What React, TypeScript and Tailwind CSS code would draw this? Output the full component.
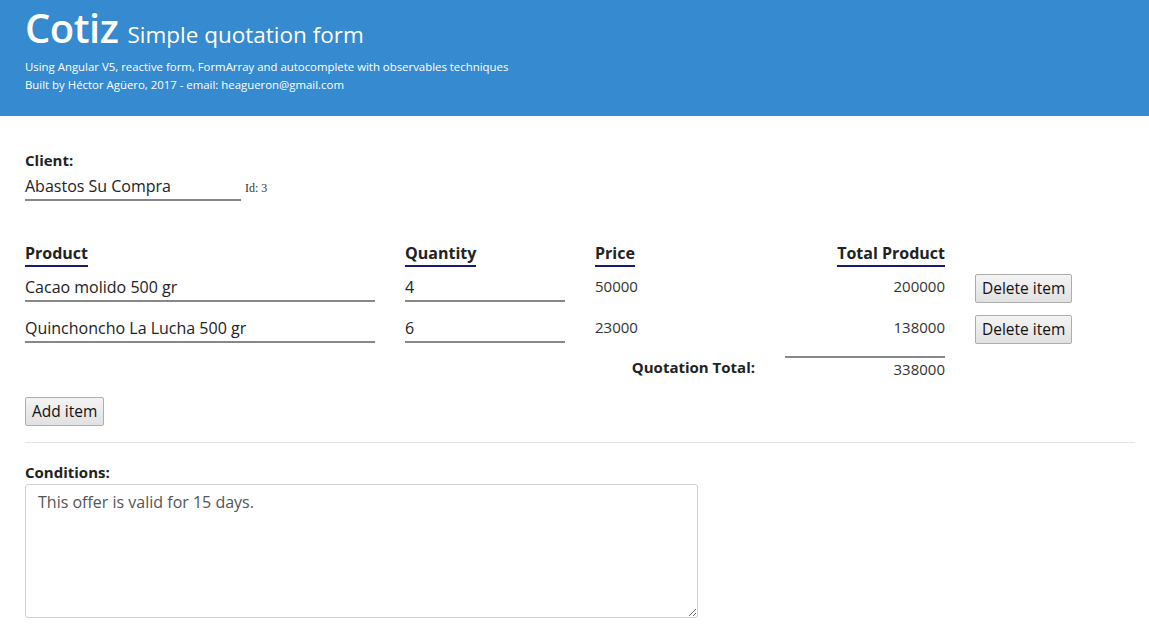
import React from 'react';

interface Item {
  product: string;
  quantity: number;
  price: number;
}

const items: Item[] = [
  { product: 'Cacao molido 500 gr', quantity: 4, price: 50000 },
  { product: 'Quinchoncho La Lucha 500 gr', quantity: 6, price: 23000 },
];

const btn =
  'h-[29px] px-[6px] text-[15.5px] text-[#111] border border-[#adadad] rounded-[2px] bg-gradient-to-b from-[#f4f4f4] to-[#e1e1e1]';

const App = () => {
  const total = items.reduce((s, i) => s + i.quantity * i.price, 0);

  return (
    <div className="min-h-screen bg-white text-[#222] font-['Open_Sans','Noto_Sans',sans-serif]">
      {/* Header */}
      <header className="h-[116px] bg-[#368ad0] text-white px-[25px] pt-[5px]">
        <div className="flex items-baseline gap-[9px]">
          <span className="text-[40px] font-semibold leading-[45px] tracking-[-0.5px]">Cotiz</span>
          <span className="text-[22.5px] leading-[45px]">Simple quotation form</span>
        </div>
        <p className="text-[11.4px] leading-[18px] mt-[1px]">
          Using Angular V5, reactive form, FormArray and autocomplete with observables techniques
        </p>
        <p className="text-[11.4px] leading-[18px]">Built by Héctor Agüero, 2017 - email: heagueron@gmail.com</p>
      </header>

      <main className="pl-[25px] pr-[14px] pt-[34px]">
        {/* Client */}
        <div className="text-[15px] font-bold leading-[20px]">Client:</div>
        <div className="flex items-end gap-[4px] mt-[3px]">
          <div className="w-[216px] h-[28px] border-b-2 border-[#888] text-[16px] leading-[26px]">Abastos Su Compra</div>
          <span className="text-[12px] font-['Liberation_Serif',serif] text-[#333] mb-[4px]">Id: 3</span>
        </div>

        {/* Items */}
        <div className="grid grid-cols-[350px_160px_160px_160px_auto] gap-x-[30px] mt-[41px]">
          <div className="text-[16px] font-bold leading-[22px]">
            <span className="border-b-2 border-[#1a1a6e] pb-[1px]">Product</span>
          </div>
          <div className="text-[16px] font-bold leading-[22px]">
            <span className="border-b-2 border-[#1a1a6e] pb-[1px]">Quantity</span>
          </div>
          <div className="text-[16px] font-bold leading-[22px]">
            <span className="border-b-2 border-[#1a1a6e] pb-[1px]">Price</span>
          </div>
          <div className="text-[16px] font-bold leading-[22px] text-right">
            <span className="border-b-2 border-[#1a1a6e] pb-[1px]">Total Product</span>
          </div>
          <div />

          {items.map((item, idx) => (
            <React.Fragment key={idx}>
              <div className={`h-[27px] border-b-2 border-[#888] text-[16px] leading-[25px] ${idx === 0 ? 'mt-[11px]' : 'mt-[13px]'}`}>
                {item.product}
              </div>
              <div className={`h-[27px] border-b-2 border-[#888] text-[16px] leading-[25px] ${idx === 0 ? 'mt-[11px]' : 'mt-[13px]'}`}>
                {item.quantity}
              </div>
              <div className={`text-[15px] leading-[25px] text-[#333] ${idx === 0 ? 'mt-[10px]' : 'mt-[12px]'}`}>{item.price}</div>
              <div className={`text-[15px] leading-[25px] text-[#333] text-right ${idx === 0 ? 'mt-[10px]' : 'mt-[12px]'}`}>
                {item.quantity * item.price}
              </div>
              <div className={idx === 0 ? 'mt-[10px]' : 'mt-[12px]'}>
                <button className={btn}>Delete item</button>
              </div>
            </React.Fragment>
          ))}

          <div />
          <div />
          <div className="text-right text-[15px] font-bold leading-[22px] mt-[12px]">Quotation Total:</div>
          <div className="mt-[12px] border-t-2 border-[#888] text-right text-[15px] leading-[22px] text-[#333]">
            {total}
          </div>
          <div />
        </div>

        <button className={`${btn} mt-[17px] h-[28px]`}>Add item</button>

        <hr className="mt-[16px] border-t border-[#e3e3e3]" />

        {/* Conditions */}
        <div className="text-[15px] font-bold leading-[20px] mt-[19px]">Conditions:</div>
        <textarea
          className="block mt-[2px] w-[673px] h-[134px] border border-[#cfcfcf] rounded-[3px] px-[12px] py-[6px] text-[16px] leading-[22px] text-[#555] resize-y outline-none"
          defaultValue="This offer is valid for 15 days."
        />
      </main>
    </div>
  );
};

export default App;
